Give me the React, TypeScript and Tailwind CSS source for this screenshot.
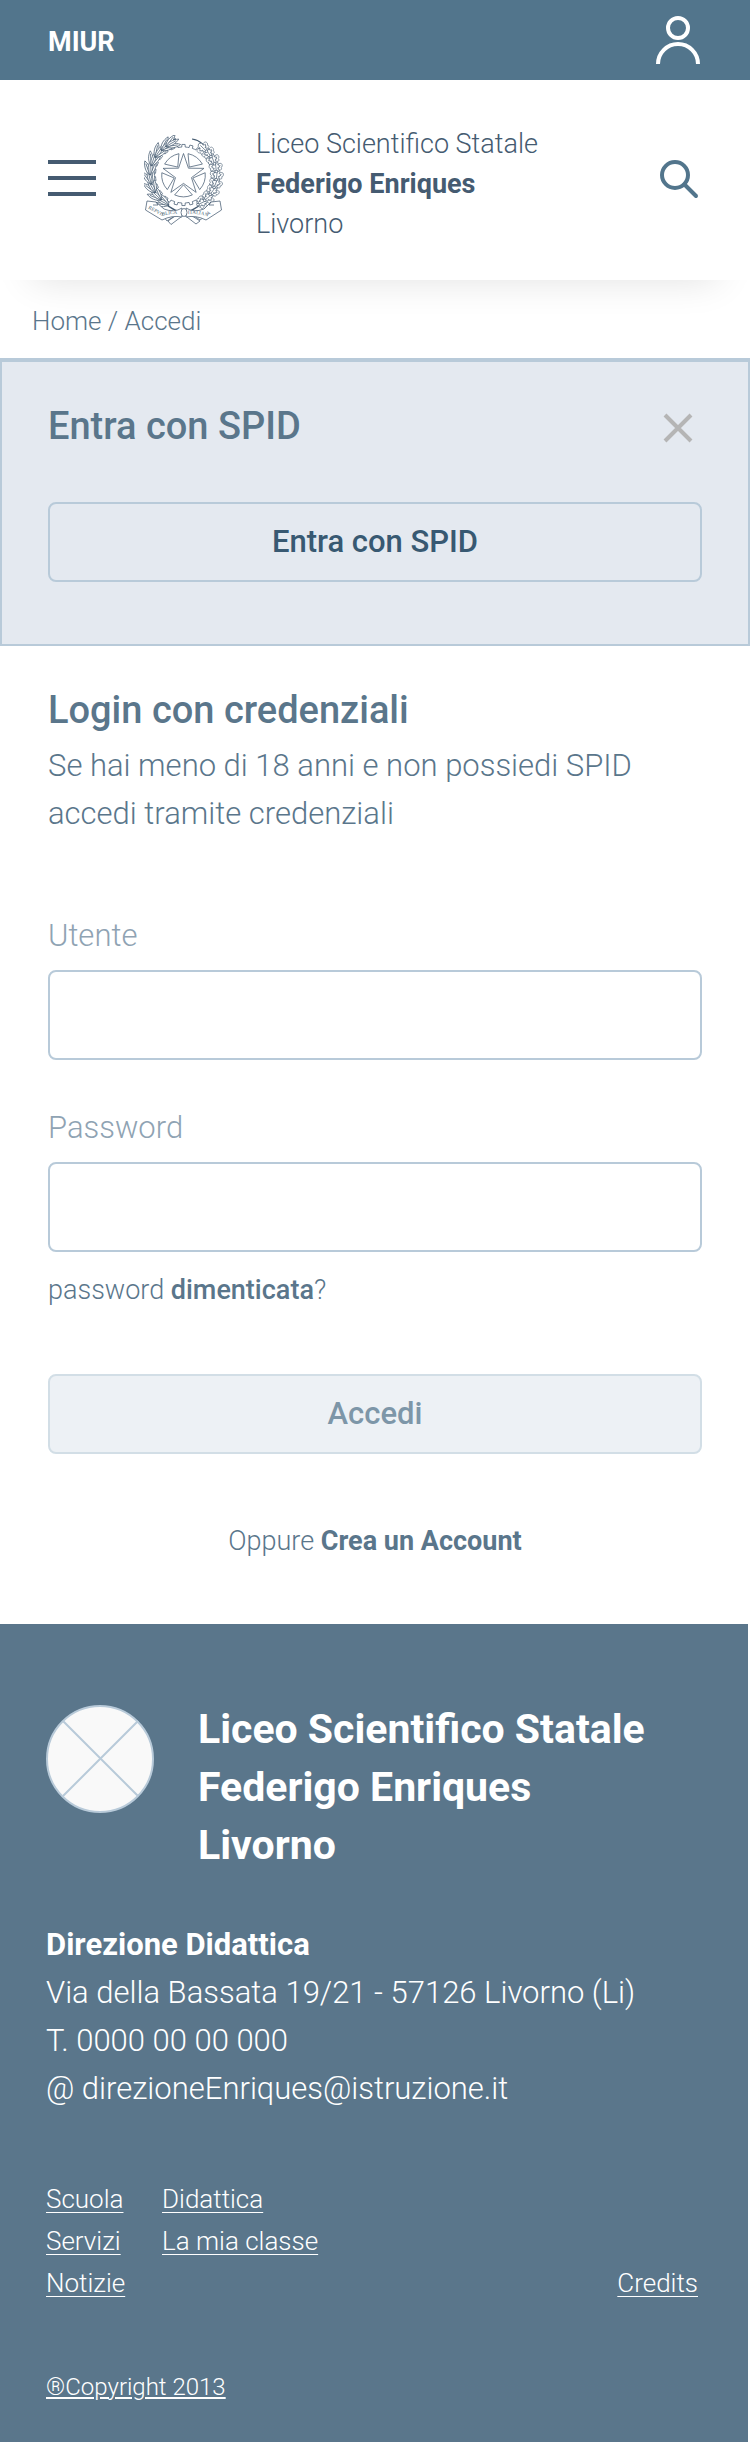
import { ReactNode } from "react";

const CX = 39.5;
const CY = 40;

function polar(r: number, deg: number): string {
  const a = (deg * Math.PI) / 180;
  return `${(CX + r * Math.sin(a)).toFixed(2)} ${(CY - r * Math.cos(a)).toFixed(2)}`;
}

const starPath =
  "M" +
  Array.from({ length: 10 }, (_, i) => polar(i % 2 ? 8.4 : 21.5, i * 36)).join("L") +
  "Z";

const wheelPath = [36, 108, 180, 252, 324]
  .map((d) => `M${polar(9.8, d)}L${polar(21.8, d - 24)}A21.8 21.8 0 0 1 ${polar(21.8, d + 24)}Z`)
  .join("");

const gearPath =
  "M" +
  Array.from({ length: 24 }, (_, i) => {
    const d = i * 15;
    return [polar(28, d - 7), polar(28, d - 3.5), polar(30.6, d - 3), polar(30.6, d + 3), polar(28, d + 3.5)].join("L");
  }).join("L") +
  "Z";

const OLIVE = "M0 0C-3.4 -4 -3.2 -10 0 -15C3.2 -10 3.4 -4 0 0ZM0 0L0 -12";
const OAK =
  "M0 0C-3 -1 -3.4 -3 -2 -4C-5 -4.6 -4.8 -7.4 -2.4 -7.8C-4 -9.6 -2 -12.4 0 -12.6C2 -12.4 4 -9.6 2.4 -7.8C4.8 -7.4 5 -4.6 2 -4C3.4 -3 3 -1 0 0ZM0 0L0 -10";

const oliveAngles = [206, 222, 238, 254, 270, 286, 302, 318, 328];
const oakAngles = [154, 140, 126, 112, 98, 84, 70, 56, 44];

function Emblem() {
  return (
    <svg viewBox="0 0 80 90" className="h-[90px] w-20 shrink-0" fill="white" stroke="#455b71" strokeWidth="0.75" aria-label="Repubblica Italiana" role="img">
      <path d={gearPath} />
      <path d={wheelPath} />
      <path d={starPath} />
      <path d="M33 76C10 66 2 40 12 20C18 10 24 5 32 4" fill="none" strokeWidth="1.3" />
      <path d="M46 76C69 66 77 40 67 20C61 10 56 5 48 4" fill="none" strokeWidth="1.1" />
      {oliveAngles.map((d) => {
        const [x, y] = polar(33.5, d).split(" ");
        return (
          <g key={d} transform={`translate(${x} ${y})`}>
            <path d={OLIVE} transform={`rotate(${d + 114}) scale(0.9 1)`} />
            <path d={OLIVE} transform={`rotate(${d + 70}) scale(0.9 1)`} />
            <path d={OLIVE} transform={`rotate(${d + 92}) scale(0.8 1)`} />
          </g>
        );
      })}
      {oakAngles.map((d) => {
        const [x, y] = polar(33, d).split(" ");
        return (
          <g key={d} transform={`translate(${x} ${y})`}>
            <path d={OAK} transform={`rotate(${d - 130}) scale(0.75)`} />
            <path d={OAK} transform={`rotate(${d - 52}) scale(0.75)`} />
            <path d={OAK} transform={`rotate(${d - 90}) scale(0.85)`} />
            <circle r="1.3" />
          </g>
        );
      })}
      <path d="M37 77L24 86L27 89.5L41 79ZM42 77L56 86L52 89L39 79ZM38 76L20 82L23 86ZM43 76L60 82L56 85Z" />
      <path d="M3 66L12 67L20 74Q30 78 38 73L38 82Q28 80 18 85L1.500 75Z" />
      <path d="M76 66L67 67L60 74Q50 78 42 73L42 82Q52 80 62 85L77.500 75Z" />
      <path d="M12 67L14 70L9 70M67 67L65 70L70 70" fill="none" />
      <ellipse cx="40" cy="77.500" rx="3" ry="4" />
      <path id="ribbonLeft" d="M4 73.500L18 81Q28 78 38 79" fill="none" stroke="none" />
      <path id="ribbonRight" d="M44 79Q52 78 62 81L77 73" fill="none" stroke="none" />
      <g fill="#455b71" stroke="none" fontSize="5" fontFamily="Liberation Serif, serif">
        <text>
          <textPath href="#ribbonLeft">REPVBBLICA</textPath>
        </text>
        <text>
          <textPath href="#ribbonRight">ITALIANA</textPath>
        </text>
      </g>
    </svg>
  );
}

function FooterLink({ children }: { children: ReactNode }) {
  return (
    <a href="#" className="w-fit text-[26px] leading-[42px] underline decoration-1 underline-offset-4">
      {children}
    </a>
  );
}

function Field({ id, label, type }: { id: string; label: string; type: string }) {
  return (
    <div className="flex flex-col gap-2.5">
      <label htmlFor={id} className="text-[31px] leading-12 font-light text-[#8fa3b3]">
        {label}
      </label>
      <input id={id} type={type} className="h-[90px] w-full rounded-lg border-2 border-[#b8cad9] bg-white px-6 text-[31px] text-[#5a768b] outline-none" />
    </div>
  );
}

export default function App() {
  return (
    <div className="min-h-screen bg-white font-['Roboto',sans-serif] text-[#5a768b]">
      <div className="flex h-20 items-center justify-between bg-[#52758c] px-12 text-white">
        <a href="#" className="pt-1 text-[27px] leading-9 font-bold">MIUR</a>
        <button type="button" aria-label="Profilo">
          <svg viewBox="0 0 48 48" className="size-12" fill="none" stroke="currentColor" strokeWidth="4">
            <circle cx="24" cy="12" r="10" />
            <path d="M4 48A20 20 0 0 1 44 48" />
          </svg>
        </button>
      </div>

      <header className="relative flex h-[200px] items-center bg-white px-12 text-[#455b71] shadow-[0_32px_36px_-32px_rgba(0,0,0,0.12)]">
        <button type="button" aria-label="Menu" className="mr-12 flex w-12 flex-col gap-3 pb-1">
          <span className="h-1 w-full bg-current" />
          <span className="h-1 w-full bg-current" />
          <span className="h-1 w-full bg-current" />
        </button>
        <Emblem />
        <p className="ml-8 flex-1 pt-2 text-[27px] leading-10 font-light">
          Liceo Scientifico Statale
          <br />
          <strong className="font-bold">Federigo Enriques</strong>
          <br />
          Livorno
        </p>
        <button type="button" aria-label="Cerca" className="text-[#52758c]">
          <svg viewBox="0 0 48 48" className="size-12" fill="none" stroke="currentColor" strokeWidth="4">
            <circle cx="21" cy="19" r="13" />
            <path d="M30.500 28.500L42 40" strokeLinecap="round" />
          </svg>
        </button>
      </header>

      <nav aria-label="Breadcrumb" className="relative px-8 pt-5 pb-4 text-[26px] leading-[42px] font-light">
        <a href="#">Home</a> / <a href="#">Accedi</a>
      </nav>

      <main>
        <section className="border-2 border-t-4 border-[#b8cad9] bg-[#e4e9f0] px-[46px] pt-9 pb-[62px]">
          <div className="flex items-center justify-between">
            <h2 className="text-[38px] leading-14 font-medium">Entra con SPID</h2>
            <button type="button" aria-label="Chiudi" className="text-[#b5b5b5]">
              <svg viewBox="0 0 48 48" className="size-12" stroke="currentColor" strokeWidth="4">
                <path d="M11 13L37 39M37 13L11 39" />
              </svg>
            </button>
          </div>
          <button type="button" className="mt-12 h-20 w-full rounded-lg border-2 border-[#b8cad9] text-[31px] font-medium text-[#385972]">
            Entra con SPID
          </button>
        </section>

        <section className="px-12 pt-9">
          <h2 className="text-[38px] leading-14 font-medium">Login con credenziali</h2>
          <p className="mt-1 text-[31px] leading-12 font-light">
            Se hai meno di 18 anni e non possiedi SPID
            <br />
            accedi tramite credenziali
          </p>

          <form className="pt-[74px]" onSubmit={(e) => e.preventDefault()}>
            <div className="flex flex-col gap-11">
              <Field id="utente" label="Utente" type="text" />
              <Field id="password" label="Password" type="password" />
            </div>
            <p className="mt-[18px] text-[27px] leading-10 font-light">
              <a href="#">
                password <strong className="font-medium">dimenticata</strong>?
              </a>
            </p>
            <button type="submit" className="mt-16 h-20 w-full rounded-lg border-2 border-[#d2dee6] bg-[#edf1f5] text-[31px] font-medium text-[#7d96a8]">
              Accedi
            </button>
          </form>

          <p className="pt-[66px] pb-[62px] text-center text-[27px] leading-[42px] font-light">
            Oppure{" "}
            <a href="#" className="font-bold">
              Crea un Account
            </a>
          </p>
        </section>
      </main>

      <footer className="mr-0.5 bg-[#5a768b] px-[46px] pt-[76px] pb-[38px] font-light text-white">
        <div className="flex items-start gap-11">
          <svg viewBox="0 0 108 108" className="mt-[5px] size-[108px] shrink-0" stroke="#b8cad9" strokeWidth="2" aria-hidden="true">
            <circle cx="54" cy="54" r="53" fill="#f9f9f9" />
            <path d="M17 16L92 91M92 16L17 91" />
          </svg>
          <p className="text-[41px] leading-[58px] font-bold">
            Liceo Scientifico Statale
            <br />
            Federigo Enriques
            <br />
            Livorno
          </p>
        </div>

        <address className="mt-[47px] text-[31px] leading-12 not-italic">
          <strong className="font-bold">Direzione Didattica</strong>
          <br />
          Via della Bassata 19/21 - 57126 Livorno (Li)
          <br />
          T. 0000 00 00 000
          <br />
          @ direzioneEnriques@istruzione.it
        </address>

        <nav aria-label="Footer" className="mt-[65px] flex items-end pr-1">
          <div className="flex w-29 flex-col">
            <FooterLink>Scuola</FooterLink>
            <FooterLink>Servizi</FooterLink>
            <FooterLink>Notizie</FooterLink>
          </div>
          <div className="flex flex-col self-start">
            <FooterLink>Didattica</FooterLink>
            <FooterLink>La mia classe</FooterLink>
          </div>
          <div className="ml-auto flex">
            <FooterLink>Credits</FooterLink>
          </div>
        </nav>

        <a href="#" className="mt-[65px] block w-fit text-[24px] leading-9 underline decoration-2 underline-offset-2">
          ®Copyright 2013
        </a>
      </footer>
    </div>
  );
}
